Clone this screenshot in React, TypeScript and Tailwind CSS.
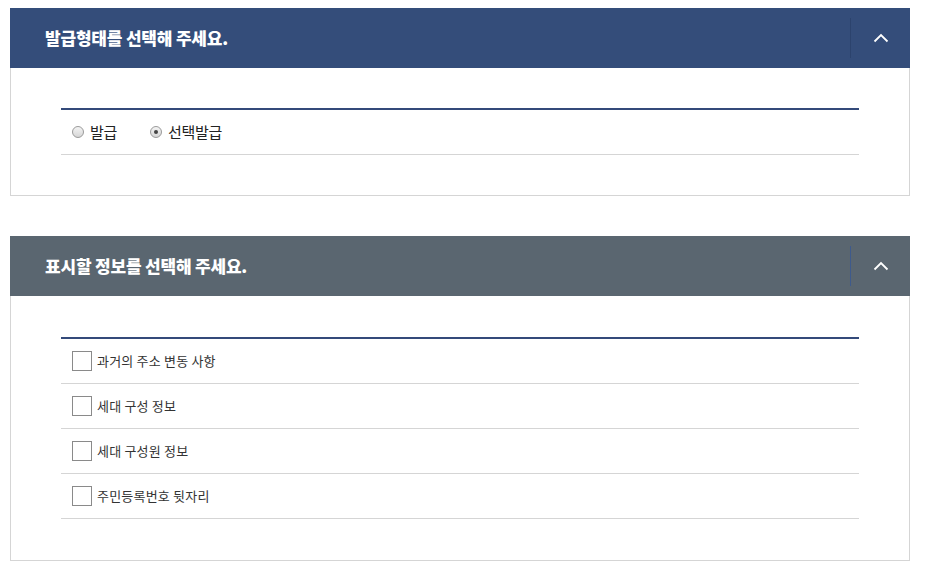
import React from "react";

const font = { fontFamily: '"Noto Sans CJK KR", "Noto Sans", sans-serif' };

function Chevron() {
  return (
    <svg width="16" height="10" viewBox="0 0 16 10" fill="none">
      <path d="M1.5 8.5 L8 2 L14.5 8.5" stroke="white" strokeWidth="1.8" />
    </svg>
  );
}

function Header({ title, bg, sep }: { title: string; bg: string; sep: string }) {
  return (
    <div className={`flex h-[60px] items-center justify-between ${bg}`}>
      <div className="pl-[35px] text-[17px] font-extrabold tracking-[-0.2px] text-white">{title}</div>
      <div className={`flex h-[40px] w-[60px] items-center justify-center border-l ${sep}`}>
        <Chevron />
      </div>
    </div>
  );
}

function Radio({ checked, label }: { checked?: boolean; label: string }) {
  return (
    <label className="flex items-center gap-[6px]">
      <span className="flex h-[12px] w-[12px] items-center justify-center rounded-full border border-[#9a9a9a] bg-gradient-to-b from-[#f4f4f4] to-[#d6d6d6]">
        {checked && <span className="h-[4px] w-[4px] rounded-full bg-[#444]" />}
      </span>
      <span className="text-[15px] tracking-[-0.3px] text-[#222]">{label}</span>
    </label>
  );
}

function CheckRow({ label }: { label: string }) {
  return (
    <div className="flex h-[45px] items-center border-b border-[#d5d5d5] pl-[11px]">
      <span className="h-[20px] w-[20px] border border-[#8a8a8a] bg-white" />
      <span className="ml-[5px] text-[13px] tracking-[0.2px] text-[#333]">{label}</span>
    </div>
  );
}

export default function App() {
  return (
    <div className="min-h-[577px] bg-white pl-[10px] pt-[8px]" style={font}>
      <div className="w-[900px]">
        <Header title="발급형태를 선택해 주세요." bg="bg-[#344d7a]" sep="border-[#2c436d]" />
        <div className="border-x border-b border-[#d5d5d5] px-[50px] py-[40px]">
          <div className="border-t-2 border-[#344a7a]">
            <div className="flex h-[45px] items-center gap-[33px] border-b border-[#d5d5d5] pl-[11px]">
              <Radio label="발급" />
              <Radio checked label="선택발급" />
            </div>
          </div>
        </div>

        <div className="mt-[40px]">
          <Header title="표시할 정보를 선택해 주세요." bg="bg-[#5a6670]" sep="border-[#3e5a8c]" />
          <div className="border-x border-b border-[#d5d5d5] px-[50px] pb-[41px] pt-[41px]">
            <div className="border-t-2 border-[#344a7a]">
              <CheckRow label="과거의 주소 변동 사항" />
              <CheckRow label="세대 구성 정보" />
              <CheckRow label="세대 구성원 정보" />
              <CheckRow label="주민등록번호 뒷자리" />
            </div>
          </div>
        </div>
      </div>
    </div>
  );
}
